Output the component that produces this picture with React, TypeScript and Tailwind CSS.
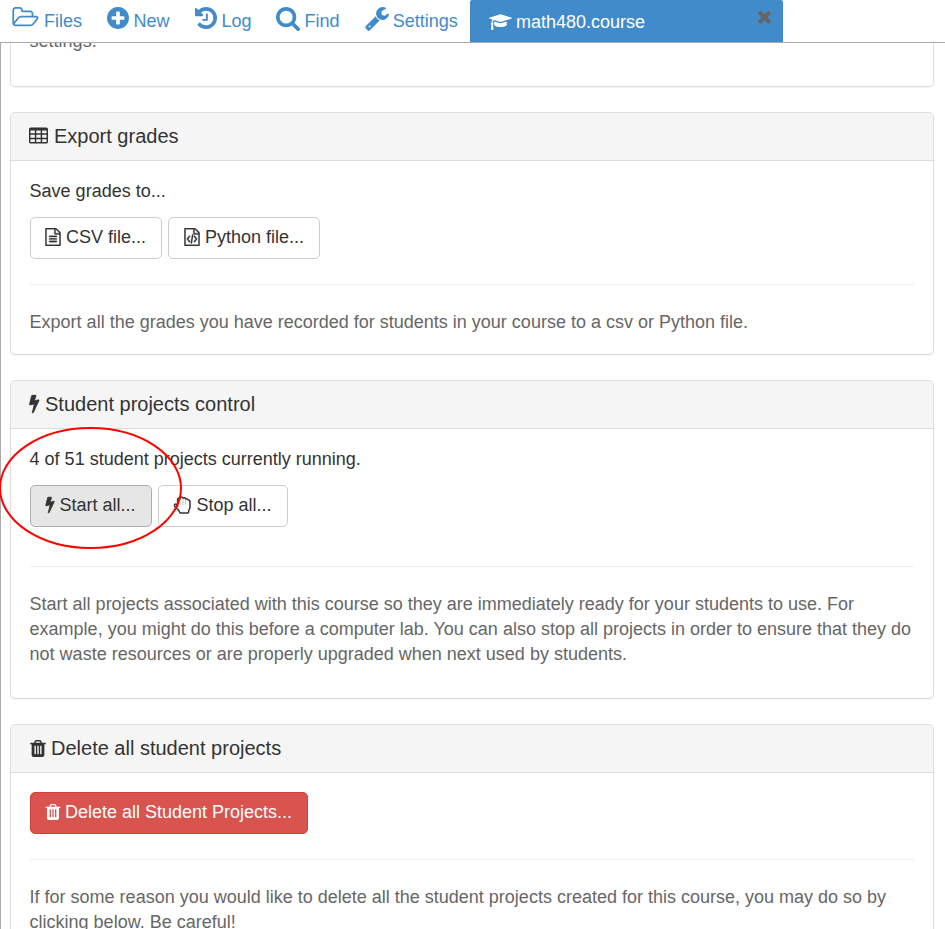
import type { ReactNode } from "react";

type IconProps = { d: string; box: string; className: string };

const Icon = ({ d, box, className }: IconProps) => (
  <svg viewBox={box} className={"inline-block shrink-0 fill-current " + className} fillRule="evenodd" aria-hidden="true">
    <path d={d} />
  </svg>
);

const FOLDER =
  "M1781 803q0-35-53-35h-1088q-40 0-85.5 21.5t-71.5 52.5l-294 363q-18 24-18 40 0 35 53 35h1088q40 0 86-22t71-53l294-363q18-22 18-39zm-1141-163h768v-160q0-40-28-68t-68-28h-576q-40 0-68-28t-28-68v-64q0-40-28-68t-68-28h-320q-40 0-68 28t-28 68v853l256-315q44-53 116-87.5t140-34.5zm1269 163q0 62-46 120l-295 363q-43 53-116 87.5t-140 34.5h-1088q-92 0-158-66t-66-158v-960q0-92 66-158t158-66h320q92 0 158 66t66 158v32h544q92 0 158 66t66 158v160h192q54 0 99 24.5t67 70.5q15 32 15 68z";
const PLUS =
  "M1344 960v-128q0-26-19-45t-45-19h-256v-256q0-26-19-45t-45-19h-128q-26 0-45 19t-19 45v256h-256q-26 0-45 19t-19 45v128q0 26 19 45t45 19h256v256q0 26 19 45t45 19h128q26 0 45-19t19-45v-256h256q26 0 45-19t19-45zm320-64q0 209-103 385.5t-279.5 279.5-385.5 103-385.5-103-279.5-279.5-103-385.5 103-385.5 279.5-279.5 385.5-103 385.5 103 279.5 279.5 103 385.5z";
const HISTORY =
  "M1664 896q0 156-61 298t-164 245-245 164-298 61q-172 0-327-72.5t-264-204.5q-7-10-6.5-22.5t8.5-20.5l137-138q10-9 25-9 16 2 23 12 73 95 179 147t225 52q104 0 198.5-40.5t163.5-109.5 109.5-163.5 40.5-198.5-40.5-198.5-109.5-163.5-163.5-109.5-198.5-40.5q-98 0-188 35.5t-160 101.5l137 138q31 30 14 69-17 40-59 40h-448q-26 0-45-19t-19-45v-448q0-42 40-59 39-17 69 14l130 129q107-101 244.5-156.5t284.5-55.5q156 0 298 61t245 164 164 245 61 298zm-640-288v448q0 14-9 23t-23 9h-320q-14 0-23-9t-9-23v-64q0-14 9-23t23-9h224v-352q0-14 9-23t23-9h64q14 0 23 9t9 23z";
const SEARCH =
  "M1216 832q0-185-131.5-316.5t-316.5-131.5-316.5 131.5-131.5 316.5 131.5 316.5 316.5 131.5 316.5-131.5 131.5-316.5zm512 832q0 52-38 90t-90 38q-54 0-90-38l-343-342q-179 124-399 124-143 0-273.5-55.5t-225-150-150-225-55.5-273.5 55.5-273.5 150-225 225-150 273.5-55.5 273.5 55.5 225 150 150 225 55.5 273.5q0 220-124 399l343 343q37 37 37 90z";
const WRENCH =
  "M448 1472q0-26-19-45t-45-19-45 19-19 45 19 45 45 19 45-19 19-45zm644-420l-682 682q-37 37-90 37-52 0-91-37l-106-108q-38-36-38-90 0-53 38-91l681-681q39 98 114.5 173.5t173.5 114.5zm634-435q0 39-23 106-47 134-164.5 217.5t-258.5 83.5q-185 0-316.5-131.5t-131.5-316.5 131.5-316.5 316.5-131.5q58 0 121.5 16.5t107.5 46.5q16 11 16 28t-16 28l-293 169v224l193 107q5-3 79-48.5t135.5-81 70.5-35.5q15 0 23.5 10t8.5 25z";
const CAP =
  "M1774 836l18 316q4 69-82 128t-235 93.5-323 34.5-323-34.5-235-93.5-82-128l18-316 574 181q22 7 48 7t48-7zm530-324q0 23-22 31l-1120 352q-4 1-10 1t-10-1l-652-206q-43 34-71 111.5t-34 178.5q63 36 63 109 0 69-58 107l58 433q2 14-8 25-9 11-24 11h-192q-15 0-24-11-10-11-8-25l58-433q-58-38-58-107 0-73 65-111 11-207 98-330l-333-104q-22-8-22-31t22-31l1120-352q4-1 10-1t10 1l1120 352q22 8 22 31z";
const TIMES =
  "M1490 1322q0 40-28 68l-136 136q-28 28-68 28t-68-28l-294-294-294 294q-28 28-68 28t-68-28l-136-136q-28-28-28-68t28-68l294-294-294-294q-28-28-28-68t28-68l136-136q28-28 68-28t68 28l294 294 294-294q28-28 68-28t68 28l136 136q28 28 28 68t-28 68l-294 294 294 294q28 28 28 68z";
const CELL = "v-192q0-14-9-23t-23-9h-320q-14 0-23 9t-9 23v192q0 14 9 23t23 9h320q14 0 23-9t9-23z";
const TABLE =
  "M1664 288v1088q0 66-47 113t-113 47h-1344q-66 0-113-47t-47-113v-1088q0-66 47-113t113-47h1344q66 0 113 47t47 113z" +
  [512, 1024, 1536].map((x) => [608, 992, 1376].map((y) => `M${x} ${y}${CELL}`).join("")).join("");
const PAGE =
  "M1596 380q28 28 48 76t20 88v1152q0 40-28 68t-68 28h-1344q-40 0-68-28t-28-68v-1600q0-40 28-68t68-28h896q40 0 88 20t76 48zm-444-244v376h376q-10-29-22-41l-313-313q-12-12-41-22zm384 1528v-1024h-416q-40 0-68-28t-28-68v-416h-768v1536h1280z";
const FILE_TEXT =
  PAGE +
  [768, 1024, 1280].map((y) => `M1248 ${y}q14 0 23 9t9 23v64q0 14-9 23t-23 9h-704q-14 0-23-9t-9-23v-64q0-14 9-23t23-9z`).join("");
const FILE_CODE =
  PAGE +
  "M608 768q8-11 21-12.5t24 6.5l51 38q11 8 12.5 21t-6.5 24l-182 243 182 243q8 11 6.5 24t-12.5 21l-51 38q-11 8-24 6.5t-21-12.5l-226-301q-14-19 0-38zm802 301q14 19 0 38l-226 301q-8 11-21 12.5t-24-6.5l-51-38q-11-8-12.5-21t6.5-24l182-243-182-243q-8-11-6.5-24t12.5-21l51-38q11-8 24-6.5t21 12.5zm-620 461q-13-2-20.5-13t-5.5-24l138-831q2-13 13-20.5t24-5.5l63 10q13 2 20.5 13t5.5 24l-138 831q-2 13-13 20.5t-24 5.5z";
const BOLT =
  "M1333 566q18 20 7 44l-540 1157q-13 25-42 25-4 0-14-2-17-5-25.5-19t-4.5-30l197-808-406 101q-4 1-12 1-18 0-31-11-18-15-13-39l201-825q4-14 16-23t28-9h328q19 0 32 12.5t13 29.5q0 8-5 18l-171 463 396-98q8-2 12-2 19 0 34 15z";
const SLOT = "v-704q0-14-9-23t-23-9h-64q-14 0-23 9t-9 23v704q0 14 9 23t23 9h64q14 0 23-9t9-23z";
const TRASH =
  `M704 1376${SLOT}M960 1376${SLOT}M1216 1376${SLOT}` +
  "M672 384h448l-48-117q-7-9-17-11h-317q-10 2-17 11zm928 32v64q0 14-9 23t-23 9h-96v948q0 83-47 143.5t-113 60.5h-832q-66 0-113-58.5t-47-141.5v-952h-96q-14 0-23-9t-9-23v-64q0-14 9-23t23-9h309l70-167q15-37 54-63t79-26h320q40 0 79 26t54 63l70 167h309q14 0 23 9t9 23z";

const Bolt = ({ className }: { className: string }) => (
  <Icon d={BOLT} box="448 0 896 1792" className={"stroke-current stroke-[80px] overflow-visible " + className} />
);

const Hand = () => (
  <svg viewBox="0 0 18 20" className="h-5 w-[18px] shrink-0 fill-none stroke-current" strokeLinejoin="round" strokeLinecap="round" aria-hidden="true">
    <path
      strokeWidth="1.5"
      d="M4.600 11.500V4.600c0-1.500 1.600-1.900 2.400-1 .2-1.900 2.500-2.100 3-.5.900-.8 2.500-.4 2.600.9 1-.7 2.400 0 2.600 1 1.100-.2 1.800.6 1.800 1.700v5.300c0 1.800-1.300 2.800-1.300 4.600v.4c0 .6-.4 1-1 1H7.500c-.6 0-1-.4-1-1 0-1.200-1.300-2.300-2.300-3.300L1.800 11.200c-1-1.300.6-2.900 2-1.700z"
    />
    <path strokeWidth=".7" opacity=".4" d="M7 4.500v5M10 4v5.500M12.600 5v4.500" />
  </svg>
);

const NavItem = ({ icon, label, className }: { icon: ReactNode; label: string; className: string }) => (
  <div className={"flex h-[42px] shrink-0 text-[#428bca] " + className}>
    {icon}
    <span className="pt-2 leading-[26px]">{label}</span>
  </div>
);

const Panel = ({ icon, title, className, children }: { icon: ReactNode; title: string; className: string; children: ReactNode }) => (
  <section className={"shrink-0 rounded-[5px] border border-[#ddd] bg-white shadow-[0_1px_1px_rgba(0,0,0,0.05)] " + className}>
    <h3 className="flex h-12 items-center rounded-t-[4px] border-b border-[#ddd] bg-[#f5f5f5] pl-[18px] text-[20px] text-[#333]">
      {icon}
      <span>{title}</span>
    </h3>
    <div className="pr-[19px] pl-[18.600px]">{children}</div>
  </section>
);

const Button = ({ icon, children, className }: { icon: ReactNode; children: ReactNode; className: string }) => (
  <button className={"flex h-[42px] shrink-0 items-center rounded-[5px] border pl-[14px] pb-[2px] " + className}>
    {icon}
    <span className="whitespace-nowrap">{children}</span>
  </button>
);

export default function App() {
  return (
    <div className="relative flex h-[929px] w-[945px] flex-col overflow-hidden bg-white font-['Liberation_Sans',Arial,sans-serif] text-[18px] leading-[25px] text-[#333]">
      <nav className="flex h-[43px] shrink-0 border-b border-[#aaa]">
        <NavItem className="w-[107px] pl-3" label="Files" icon={<Icon d={FOLDER} box="0 0 1920 1536" className="mt-[7px] mr-[5px] h-[21px] w-[27px]" />} />
        <NavItem className="w-[87.500px]" label="New" icon={<Icon d={PLUS} box="128 128 1536 1536" className="mt-[7px] mr-[4.600px] h-[22px] w-[22px]" />} />
        <NavItem className="w-[81.500px]" label="Log" icon={<Icon d={HISTORY} box="128 128 1536 1536" className="mt-[7px] mr-[5px] h-[22px] w-[22px]" />} />
        <NavItem className="w-[88.500px]" label="Find" icon={<Icon d={SEARCH} box="64 128 1664 1664" className="mt-[7px] mr-[4.500px] h-6 w-6" />} />
        <NavItem className="w-[105.500px]" label="Settings" icon={<Icon d={WRENCH} box="64 128 1664 1664" className="mt-[7px] mr-[4.200px] h-6 w-6" />} />
        <div className="flex h-[42px] w-[313px] rounded-t-[2px] bg-[#428bca] pl-[19px] text-white">
          <Icon d={CAP} box="0 0 2304 1792" className="mt-[13px] mr-1 h-[18px] w-[23px]" />
          <span className="pt-[9px] leading-[26px]">math480.course</span>
          <Icon d={TIMES} box="302 302 1188 1252" className="mt-[10px] mr-[12px] ml-auto h-[14px] w-[13px] text-[#666]" />
        </div>
      </nav>
      <main className="flex min-h-0 flex-1 flex-col overflow-hidden border-l border-[#aaa] pr-[11px] pl-[9px]">
        <section className="h-11 shrink-0 rounded-b-[5px] border border-t-0 border-[#ddd] pl-[18.600px] text-[#666] shadow-[0_1px_1px_rgba(0,0,0,0.05)]">
          <p className="-mt-[14px]">settings.</p>
        </section>

        <Panel className="mt-[25px] h-[243px]" title="Export grades" icon={<Icon d={TABLE} box="0 128 1664 1408" className="mr-[6px] -mt-[2px] h-[17px] w-[19px]" />}>
          <p className="pt-[18px]">Save grades to...</p>
          <div className="mt-[13px] ml-[0.400px] flex gap-[6px]">
            <Button className="w-[132px] border-[#ccc]" icon={<Icon d={FILE_TEXT} box="128 0 1536 1792" className="mr-[5px] h-[18px] w-4 stroke-current stroke-[30px]" />}>CSV file...</Button>
            <Button className="w-[152px] border-[#ccc] pl-[15px]" icon={<Icon d={FILE_CODE} box="128 0 1536 1792" className="mr-[5px] h-[18px] w-4 stroke-current stroke-[30px]" />}>Python file...</Button>
          </div>
          <hr className="mt-[25px] ml-[0.400px] border-[#eee]" />
          <p className="mt-[25px] text-[#666]">Export all the grades you have recorded for students in your course to a csv or Python file.</p>
        </Panel>

        <Panel className="mt-[25px] h-[319px]" title="Student projects control" icon={<Bolt className="mr-[5.500px] -mt-[2px] h-[19px] w-[10.500px]" />}>
          <p className="pt-[18px]">4 of 51 student projects currently running.</p>
          <div className="mt-[13px] ml-[0.400px] flex gap-[6px]">
            <Button className="w-[122px] border-[#adadad] bg-[#e6e6e6]" icon={<Bolt className="mr-[4.500px] -mt-[1px] h-[17px] w-[10px]" />}>Start all...</Button>
            <Button className="w-[130px] border-[#ccc]" icon={<span className="mr-[5.500px] -mt-[1px] flex"><Hand /></span>}>Stop all...</Button>
          </div>
          <hr className="mt-[39px] ml-[0.400px] border-[#eee]" />
          <p className="mt-[25px] text-[#666]">
            Start all projects associated with this course so they are immediately ready for your students to use. For
            <br />
            example, you might do this before a computer lab. You can also stop all projects in order to ensure that they do
            <br />
            not waste resources or are properly upgraded when next used by students.
          </p>
        </Panel>

        <Panel className="mt-[25px] h-[243px]" title="Delete all student projects" icon={<Icon d={TRASH} box="192 128 1408 1536" className="mr-[5.500px] ml-[0.500px] h-[17px] w-4" />}>
          <div className="pt-[19px] pl-[0.400px]">
            <Button className="w-[278px] border-[#d43f3a] bg-[#d9534f] text-white" icon={<Icon d={TRASH} box="192 128 1408 1536" className="mr-1 h-4 w-4" />}>Delete all Student Projects...</Button>
          </div>
          <hr className="mt-[25px] ml-[0.400px] border-[#eee]" />
          <p className="mt-[25px] text-[#666]">
            If for some reason you would like to delete all the student projects created for this course, you may do so by
            <br />
            clicking below. Be careful!
          </p>
        </Panel>
      </main>
      {/* Hand-drawn marker circling the start button */}
      <svg className="pointer-events-none absolute top-[426px] left-0 h-[124px] w-[184px] fill-none stroke-[#f00]" viewBox="0 0 184 124" aria-hidden="true">
        <ellipse cx="90.500" cy="62" rx="90.500" ry="60" strokeWidth="2" />
      </svg>
    </div>
  );
}
